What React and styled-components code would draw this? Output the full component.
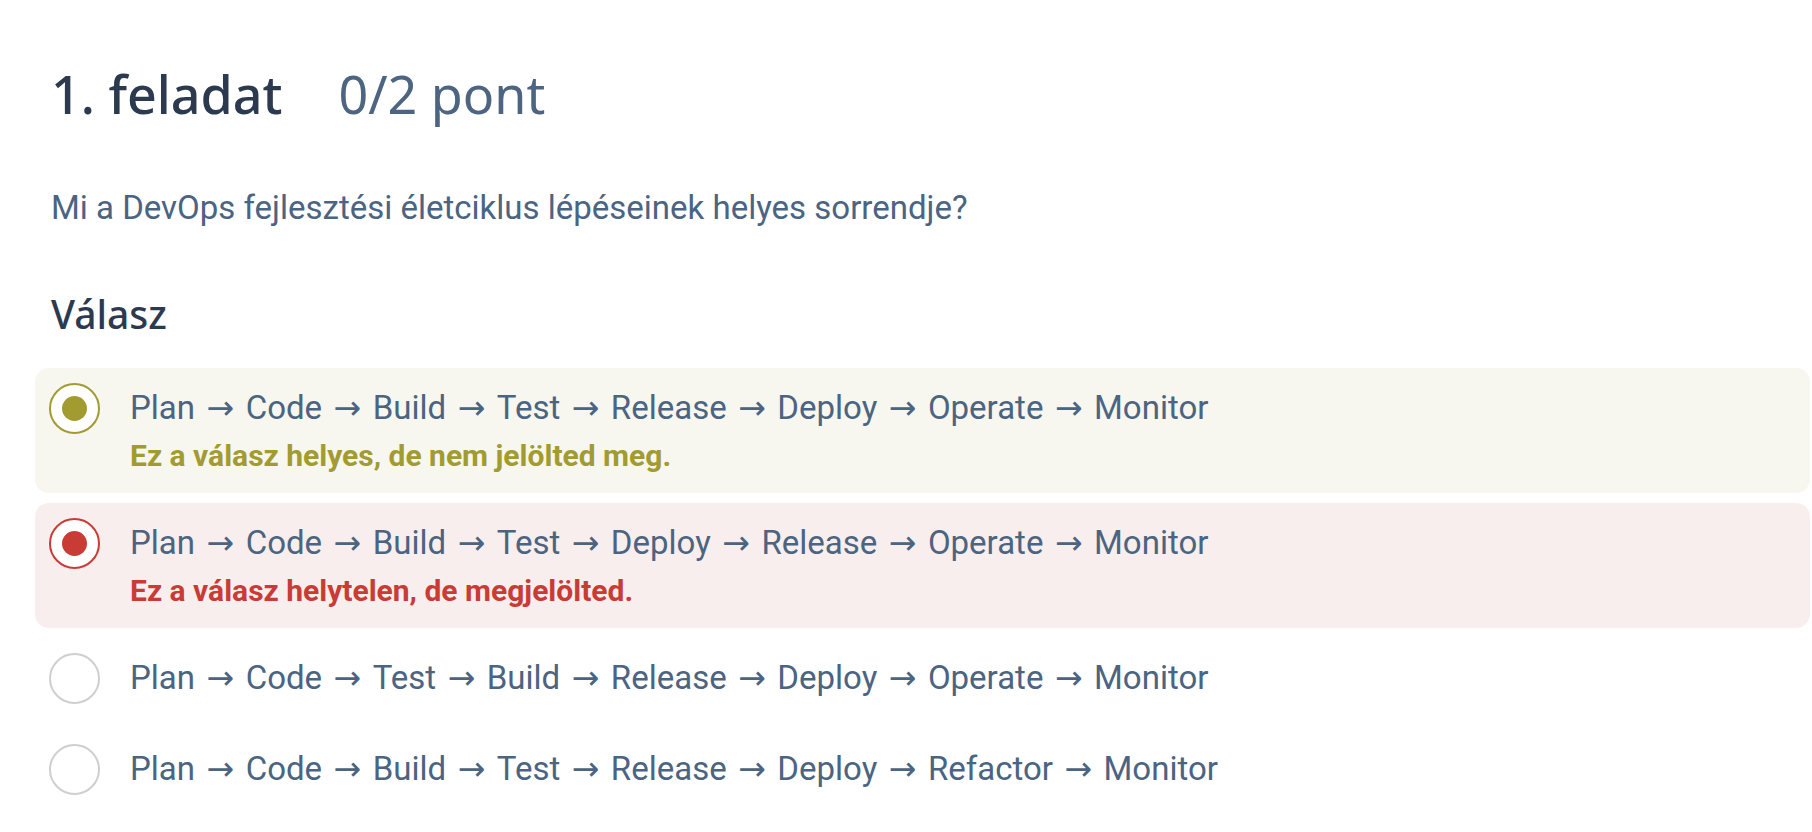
import styled, { createGlobalStyle } from 'styled-components'

const GlobalStyle = createGlobalStyle`
  body {
    margin: 0;
    background: #fff;
    font-family: Roboto, "Liberation Sans", sans-serif;
  }
`

const Page = styled.div`
  padding: 58px 2px 40px 35px;
`

const Header = styled.h1`
  margin: 0 0 0 16px;
  display: flex;
  align-items: baseline;
  gap: 56px;
  font-family: "Noto Sans", sans-serif;
  font-weight: 500;
  font-size: 52px;
  line-height: 72px;
  color: #2c3a4f;
`

const Points = styled.span`
  font-weight: 400;
  color: #4d6580;
`

const Question = styled.p`
  margin: 58px 0 0 16px;
  font-size: 33px;
  line-height: 40px;
  color: #4b6481;
`

const SectionTitle = styled.h2`
  margin: 62px 0 0 16px;
  font-family: "Noto Sans", sans-serif;
  font-weight: 500;
  font-size: 39px;
  line-height: 48px;
  color: #2c3a4f;
`

const Options = styled.div`
  margin-top: 30px;
  display: flex;
  flex-direction: column;
  gap: 10px;
`

const tones = {
  correct: { bg: '#f7f6ef', main: '#a19b30' },
  wrong: { bg: '#f9eeee', main: '#c93b35' },
  none: { bg: 'transparent', main: '#cfcfcf' },
}

const Option = styled.div`
  display: flex;
  align-items: flex-start;
  gap: 30px;
  padding: 15px 14px;
  border-radius: 14px;
  background: ${(p) => tones[p.$tone].bg};
`

const Radio = styled.span`
  flex: none;
  box-sizing: border-box;
  width: 51px;
  height: 51px;
  border-radius: 50%;
  border: 2px solid ${(p) => tones[p.$tone].main};
  background: #fff;
  display: flex;
  align-items: center;
  justify-content: center;

  &::after {
    content: '';
    display: ${(p) => (p.$tone === 'none' ? 'none' : 'block')};
    width: 25px;
    height: 25px;
    border-radius: 50%;
    background: ${(p) => tones[p.$tone].main};
  }
`

const Body = styled.div`
  display: flex;
  flex-direction: column;
`

const Label = styled.div`
  font-size: 33px;
  line-height: 50px;
  color: #4b6481;
`

const Arrow = styled.span`
  font-family: "DejaVu Sans", sans-serif;
  margin: 0 1px;
`

const Feedback = styled.div`
  font-size: 30px;
  font-weight: 700;
  line-height: 45px;
  color: ${(p) => tones[p.$tone].main};
`

const answers = [
  {
    steps: ['Plan', 'Code', 'Build', 'Test', 'Release', 'Deploy', 'Operate', 'Monitor'],
    tone: 'correct',
    note: 'Ez a válasz helyes, de nem jelölted meg.',
  },
  {
    steps: ['Plan', 'Code', 'Build', 'Test', 'Deploy', 'Release', 'Operate', 'Monitor'],
    tone: 'wrong',
    note: 'Ez a válasz helytelen, de megjelölted.',
  },
  {
    steps: ['Plan', 'Code', 'Test', 'Build', 'Release', 'Deploy', 'Operate', 'Monitor'],
    tone: 'none',
  },
  {
    steps: ['Plan', 'Code', 'Build', 'Test', 'Release', 'Deploy', 'Refactor', 'Monitor'],
    tone: 'none',
  },
]

export default function App() {
  return (
    <Page>
      <GlobalStyle />
      <Header>
        1. feladat <Points>0/2 pont</Points>
      </Header>
      <Question>Mi a DevOps fejlesztési életciklus lépéseinek helyes sorrendje?</Question>
      <SectionTitle>Válasz</SectionTitle>
      <Options>
        {answers.map((a, i) => (
          <Option key={i} $tone={a.tone}>
            <Radio $tone={a.tone} />
            <Body>
              <Label>
                {a.steps.map((s, j) => (
                  <span key={j}>
                    {j > 0 && <Arrow> → </Arrow>}
                    {s}
                  </span>
                ))}
              </Label>
              {a.note && <Feedback $tone={a.tone}>{a.note}</Feedback>}
            </Body>
          </Option>
        ))}
      </Options>
    </Page>
  )
}
